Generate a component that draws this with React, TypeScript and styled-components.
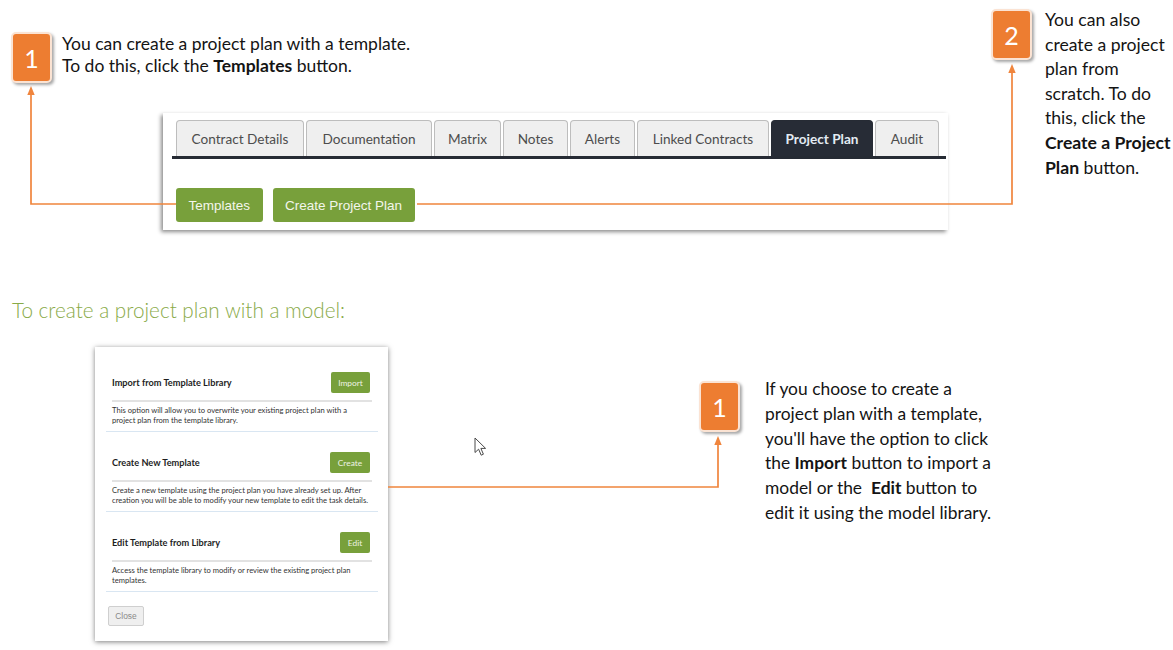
import React from "react";
import styled, { createGlobalStyle } from "styled-components";

const GlobalStyle = createGlobalStyle`
  html, body { margin: 0; padding: 0; background: #ffffff; }
  body { font-family: Lato, "Noto Sans", sans-serif; color: #111; }
  * { box-sizing: border-box; }
`;

const ORANGE = "#ed7d31";
const LINE = "#f0853d";
const GREEN = "#78a03b";

const Page = styled.div`
  position: relative;
  width: 1173px;
  height: 650px;
  overflow: hidden;
  background: #fff;
`;

const TopSection = styled.div`
  display: grid;
  grid-template-columns: 991px 1fr;
  height: 229px;
`;

const LeftColumn = styled.div`
  display: flex;
  flex-direction: column;
  align-items: flex-start;
`;

const Callout = styled.div<{ $mt: number; $ml: number; $gap: number }>`
  display: flex;
  align-items: flex-start;
  gap: ${(p) => p.$gap}px;
  margin-top: ${(p) => p.$mt}px;
  margin-left: ${(p) => p.$ml}px;
`;

const Badge = styled.div`
  flex: none;
  width: 41px;
  height: 51px;
  border-radius: 5px;
  background: ${ORANGE};
  border: 2px solid #fbe3d3;
  box-shadow: 2px 2px 3px rgba(0, 0, 0, 0.35);
  color: #fff;
  font-family: Lato, sans-serif;
  font-size: 25px;
  display: flex;
  align-items: center;
  justify-content: center;
`;

const CalloutText = styled.div<{ $size: number; $lh: number; $mt: number }>`
  font-family: Lato, sans-serif;
  font-size: ${(p) => p.$size}px;
  line-height: ${(p) => p.$lh}px;
  margin-top: ${(p) => p.$mt}px;
  color: #141414;
  white-space: nowrap;
  b { font-weight: 700; }
`;

const ScreenPanel = styled.div`
  margin-top: 30px;
  margin-left: 163px;
  width: 785px;
  height: 117px;
  background: #fff;
  padding: 7px 2px 8px 9px;
  box-shadow: -2px 2px 4px rgba(0, 0, 0, 0.45);
`;

const TabBar = styled.div`
  display: flex;
  align-items: flex-end;
  gap: 2px;
  padding-left: 4px;
  border-bottom: 3px solid #262b34;
`;

const Tab = styled.div<{ $active?: boolean; $w: number }>`
  width: ${(p) => p.$w}px;
  height: 36px;
  display: flex;
  align-items: center;
  justify-content: center;
  border: 1px solid ${(p) => (p.$active ? "#262b34" : "#bdbdbd")};
  border-bottom: none;
  border-radius: 4px 4px 0 0;
  background: ${(p) => (p.$active ? "#272c36" : "#efefef")};
  color: ${(p) => (p.$active ? "#e3ebf3" : "#4d4d4d")};
  font-family: Lato, sans-serif;
  font-size: 13.6px;
  font-weight: ${(p) => (p.$active ? 700 : 400)};
  white-space: nowrap;
`;

const ButtonRow = styled.div`
  display: flex;
  gap: 10px;
  margin-top: 29px;
  padding-left: 4px;
`;

const GreenButton = styled.div`
  height: 34px;
  padding: 0 12.5px;
  display: flex;
  align-items: center;
  background: ${GREEN};
  border-radius: 3px;
  color: #f3f6ec;
  font-family: "Liberation Sans", Arial, sans-serif;
  font-size: 13.5px;
`;

const RightColumn = styled.div`
  display: flex;
  flex-direction: column;
`;

const SectionHeading = styled.h2`
  margin: 69px 0 0 12px;
  font-family: Lato, sans-serif;
  font-weight: 300;
  font-size: 20.7px;
  line-height: 24px;
  color: #89aa48;
`;

const ModelRow = styled.div`
  display: flex;
  align-items: flex-start;
  margin-top: 25px;
`;

const Modal = styled.div`
  margin-left: 95px;
  width: 293px;
  height: 294px;
  background: #fff;
  padding: 5px 10px 14px 11px;
  box-shadow: 0 1px 5px rgba(0, 0, 0, 0.5);
  display: flex;
  flex-direction: column;
  align-items: flex-start;
`;

const ModalSection = styled.div`
  width: 100%;
  padding: 20px 6px 0 6px;
  border-bottom: 1px solid #d9e6f2;
`;

const ModalHeader = styled.div`
  display: flex;
  align-items: center;
  justify-content: space-between;
  height: 30px;
  padding: 0 2px 7px 0;
  border-bottom: 2px solid #e2e2e2;
`;

const ModalTitle = styled.div`
  font-family: Lato, sans-serif;
  font-weight: 700;
  font-size: 9.2px;
  color: #1e1e1e;
`;

const SmallGreenButton = styled.div<{ $w: number }>`
  width: ${(p) => p.$w}px;
  height: 21px;
  display: flex;
  align-items: center;
  justify-content: center;
  background: ${GREEN};
  border-radius: 2px;
  color: #eef3e4;
  font-family: Lato, sans-serif;
  font-size: 8.4px;
`;

const ModalDesc = styled.div`
  height: 29px;
  padding-top: 3px;
  font-family: Lato, sans-serif;
  font-size: 7.6px;
  line-height: 10px;
  color: #333;
  white-space: nowrap;
`;

const CloseButton = styled.div`
  margin: 14px 0 0 2px;
  width: 36px;
  height: 20px;
  display: flex;
  align-items: center;
  justify-content: center;
  background: #efefef;
  border: 1px solid #cfcfcf;
  border-radius: 2px;
  color: #8a8a8a;
  font-family: "Liberation Sans", Arial, sans-serif;
  font-size: 8.4px;
`;

const Overlay = styled.svg`
  position: absolute;
  left: 0;
  top: 0;
  pointer-events: none;
`;

const Cursor = styled.svg`
  position: absolute;
  left: 474px;
  top: 437px;
`;

const tabs = [
  { label: "Contract Details", w: 128 },
  { label: "Documentation", w: 126 },
  { label: "Matrix", w: 67 },
  { label: "Notes", w: 65 },
  { label: "Alerts", w: 65 },
  { label: "Linked Contracts", w: 132 },
  { label: "Project Plan", w: 102, active: true },
  { label: "Audit", w: 64 },
];

const sections = [
  {
    title: "Import from Template Library",
    button: "Import",
    bw: 39,
    desc: [
      "This option will allow you to overwrite your existing project plan with a",
      "project plan from the template library.",
    ],
  },
  {
    title: "Create New Template",
    button: "Create",
    bw: 40,
    desc: [
      "Create a new template using the project plan you have already set up. After",
      "creation you will be able to modify your new template to edit the task details.",
    ],
  },
  {
    title: "Edit Template from Library",
    button: "Edit",
    bw: 30,
    desc: [
      "Access the template library to modify or review the existing project plan",
      "templates.",
    ],
  },
];

export default function App() {
  return (
    <Page>
      <GlobalStyle />
      <TopSection>
        <LeftColumn>
          <Callout $mt={32} $ml={11} $gap={10}>
            <Badge>1</Badge>
            <CalloutText $size={17.5} $lh={22} $mt={1}>
              You can create a project plan with a template.
              <br />
              To do this, click the <b>Templates</b> button.
            </CalloutText>
          </Callout>
          <ScreenPanel>
            <TabBar>
              {tabs.map((t) => (
                <Tab key={t.label} $w={t.w} $active={t.active}>
                  {t.label}
                </Tab>
              ))}
            </TabBar>
            <ButtonRow>
              <GreenButton>Templates</GreenButton>
              <GreenButton>Create Project Plan</GreenButton>
            </ButtonRow>
          </ScreenPanel>
        </LeftColumn>
        <RightColumn>
          <Callout $mt={9} $ml={0} $gap={13}>
            <Badge>2</Badge>
            <CalloutText $size={17.6} $lh={24.6} $mt={-1}>
              You can also
              <br />
              create a project
              <br />
              plan from
              <br />
              scratch. To do
              <br />
              this, click the
              <br />
              <b>Create a Project</b>
              <br />
              <b>Plan</b> button.
            </CalloutText>
          </Callout>
        </RightColumn>
      </TopSection>

      <SectionHeading>To create a project plan with a model:</SectionHeading>

      <ModelRow>
        <Modal>
          {sections.map((s) => (
            <ModalSection key={s.title}>
              <ModalHeader>
                <ModalTitle>{s.title}</ModalTitle>
                <SmallGreenButton $w={s.bw}>{s.button}</SmallGreenButton>
              </ModalHeader>
              <ModalDesc>
                {s.desc[0]}
                <br />
                {s.desc[1]}
              </ModalDesc>
            </ModalSection>
          ))}
          <CloseButton>Close</CloseButton>
        </Modal>
        <Callout $mt={34} $ml={311} $gap={25}>
          <Badge>1</Badge>
          <CalloutText $size={17.4} $lh={24.8} $mt={-4}>
            If you choose to create a
            <br />
            project plan with a template,
            <br />
            you'll have the option to click
            <br />
            the <b>Import</b> button to import a
            <br />
            model or the&nbsp; <b>Edit</b> button to
            <br />
            edit it using the model library.
          </CalloutText>
        </Callout>
      </ModelRow>

      <Overlay width="1173" height="650" viewBox="0 0 1173 650">
        <g fill="none" stroke={LINE} strokeWidth="1.7">
          <polyline points="31,94 31,204 176,204" />
          <polyline points="417,204 1012,204 1012,71" />
          <polyline points="388,487 718,487 718,443" />
        </g>
        <g fill={LINE}>
          <polygon points="31,86 27.3,95 34.7,95" />
          <polygon points="1012,64 1008.3,73 1015.7,73" />
          <polygon points="718,436 714.3,445 721.7,445" />
        </g>
      </Overlay>

      <Cursor width="14" height="20" viewBox="0 0 14 20">
        <path
          d="M1 1 L1 15.5 L4.6 12.2 L7.2 18.2 L9.4 17.2 L6.9 11.4 L11.6 11.4 Z"
          fill="#fff"
          stroke="#4a4a4a"
          strokeWidth="1"
          strokeLinejoin="round"
        />
      </Cursor>
    </Page>
  );
}
